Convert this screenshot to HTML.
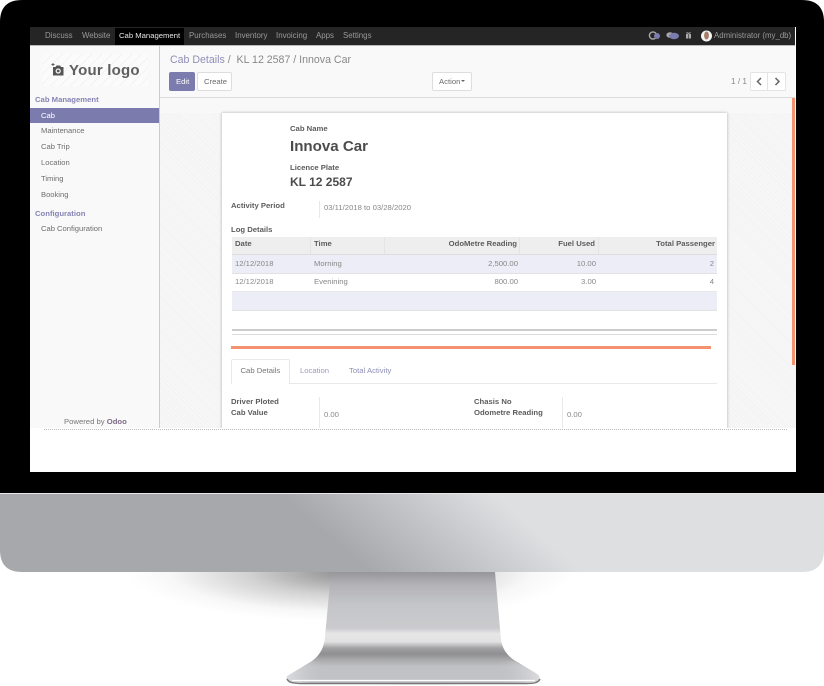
<!DOCTYPE html>
<html><head><meta charset="utf-8"><style>
html,body{margin:0;padding:0;background:#fff}
body{width:824px;height:686px;position:relative;overflow:hidden;font-family:"Liberation Sans",sans-serif}
.a{position:absolute}
.t{position:absolute;white-space:nowrap;line-height:10px;height:10px;font-size:7.7px;color:#6b6b6b;filter:blur(.25px)}
.n{color:#999;top:31px;font-size:7.9px}
.b{font-weight:bold;color:#5c5c5c;font-size:7.7px}
.s{color:#6e6e6e;left:41px;font-size:7.6px}
.r{text-align:right}
.hatch{background-color:#f7f7f7;background-image:repeating-linear-gradient(45deg,#f1f1f1 0 1px,#fafafa 1px 2px)}
</style></head><body>
<svg class="a" style="left:0;top:0" width="824" height="686" viewBox="0 0 824 686">
<defs>
<linearGradient id="sv" gradientUnits="userSpaceOnUse" x1="280" y1="494" x2="371" y2="389"><stop offset="0" stop-color="#a7a8ac"/><stop offset=".5" stop-color="#c2c3c6"/><stop offset="1" stop-color="#dedfe1"/></linearGradient>
<linearGradient id="st" x1="0" y1="0" x2="0" y2="1"><stop offset="0" stop-color="#97979b"/><stop offset=".12" stop-color="#b4b4b8"/><stop offset=".3" stop-color="#c5c6c9"/><stop offset=".5" stop-color="#cbcbce"/><stop offset=".55" stop-color="#e6e6e7"/><stop offset=".62" stop-color="#e2e2e3"/><stop offset=".68" stop-color="#a0a0a2"/><stop offset=".73" stop-color="#8f8f91"/><stop offset=".78" stop-color="#a8a8aa"/><stop offset=".84" stop-color="#c0c1c4"/><stop offset="1" stop-color="#c2c3c6"/></linearGradient>
<linearGradient id="ft" gradientUnits="userSpaceOnUse" x1="287" y1="0" x2="540" y2="0"><stop offset="0" stop-color="#dcdcde"/><stop offset=".14" stop-color="#c6c7ca" stop-opacity="0"/><stop offset=".84" stop-color="#c6c7ca" stop-opacity="0"/><stop offset="1" stop-color="#dcdcde"/></linearGradient>
<radialGradient id="sh" cx=".5" cy=".5" r=".5"><stop offset="0" stop-color="#000" stop-opacity=".45"/><stop offset=".45" stop-color="#000" stop-opacity=".18"/><stop offset=".8" stop-color="#000" stop-opacity=".03"/><stop offset="1" stop-color="#000" stop-opacity="0"/></radialGradient>
</defs>
<rect x="125" y="522" width="450" height="100" fill="url(#sh)"/>
<path d="M0 480V550Q0 572 22 572H802Q824 572 824 550V480Z" fill="url(#sv)"/>
<path d="M0 493V22Q0 0 22 0H802Q824 0 824 22V493Z" fill="#000"/>
<rect x="0" y="493" width="824" height="1" fill="#e8e8e8"/>
<path d="M331 572H495L501 640C503 650 507 655 514 660L537 674C541 677 540 681 536 682C500 685 325 685 291 682C286 681 285 677 289 675L312 661C320 655 324 648 325 637Z" fill="url(#st)"/>
<path d="M312 661H514L537 674C541 677 540 681 536 682C500 685 325 685 291 682C286 681 285 677 289 675Z" fill="url(#ft)"/>
<path d="M287 679C289 683 293 683 300 683.5H526C534 683.5 538 683 540 679" fill="none" stroke="#777" stroke-width="1.4"/>
<path d="M292 680.5H535" stroke="#fff" stroke-width="1.2"/>
</svg>

<div class="a" style="left:30px;top:27px;width:766px;height:445px;background:#fff"></div>
<!-- navbar -->
<div class="a" style="left:30px;top:27px;width:765px;height:19px;background:#252525;border-bottom:1px solid #bbb;box-sizing:border-box"></div>
<div class="a" style="left:115px;top:28px;width:69px;height:17px;background:#000"></div>
<span class="t n" style="left:45px">Discuss</span>
<span class="t n" style="left:82px">Website</span>
<span class="t n" style="left:119px;color:#e4e4e4;font-size:7.7px">Cab Management</span>
<span class="t n" style="left:189px">Purchases</span>
<span class="t n" style="left:235px">Inventory</span>
<span class="t n" style="left:276px">Invoicing</span>
<span class="t n" style="left:316px">Apps</span>
<span class="t n" style="left:343px">Settings</span>
<svg class="a" style="left:645px;top:28px" width="72" height="17" viewBox="645 28 72 17">
<circle cx="653" cy="35.5" r="3.6" fill="none" stroke="#aaa" stroke-width="1.4"/>
<circle cx="657" cy="36" r="3" fill="#7c7bad"/>
<ellipse cx="670" cy="35" rx="3.6" ry="2.8" fill="#aaa"/>
<ellipse cx="674" cy="36" rx="5" ry="3.2" fill="#7c7bad"/>
<rect x="686" y="34" width="5" height="4.5" fill="#aaa"/><path d="M685.5 33.5H691.5M688.5 32V38.5" stroke="#222" stroke-width=".6"/><path d="M686.5 32.5L688.5 33.5L690.5 32.5" stroke="#aaa" fill="none"/>
<circle cx="706.5" cy="36" r="5.5" fill="#f4f4f4"/>
<ellipse cx="706.5" cy="35.5" rx="2.4" ry="4" fill="#a57d66"/>
</svg>
<span class="t n" style="left:714px;font-size:7.85px">Administrator (my_db)</span>

<!-- sidebar -->
<div class="a" style="left:30px;top:46px;width:130px;height:383px;background:#f9f9f9;border-right:1px solid #ccc;box-sizing:border-box"></div>
<div class="a" style="left:42px;top:54px;width:106px;height:32px;background:repeating-linear-gradient(135deg,#f3f3f3 0 1px,#fbfbfb 1px 7px)"></div>
<svg class="a" style="left:50px;top:62px" width="16" height="15" viewBox="0 0 16 15"><path d="M3 5H5.5L6.5 3.5H10L11 5H13.5V13.5H3Z" fill="#555"/><circle cx="8.2" cy="9" r="2.6" fill="#f9f9f9"/><circle cx="8.2" cy="9" r="1.4" fill="#555"/><path d="M3 1V4M1.5 2.5H4.5" stroke="#555" stroke-width=".9"/></svg>
<span class="t" style="left:69px;top:62px;height:17px;line-height:17px;font-size:15px;font-weight:bold;color:#5f5f5f;letter-spacing:.2px">Your logo</span>
<span class="t b" style="left:35px;top:94.5px;color:#8584b5">Cab Management</span>
<div class="a" style="left:30px;top:108px;width:129px;height:15px;background:#7c7bad"></div>
<span class="t s" style="top:110.5px;color:#fff">Cab</span>
<span class="t s" style="top:126px">Maintenance</span>
<span class="t s" style="top:141.5px">Cab Trip</span>
<span class="t s" style="top:157.5px">Location</span>
<span class="t s" style="top:173.5px">Timing</span>
<span class="t s" style="top:189.5px">Booking</span>
<span class="t b" style="left:35px;top:208.5px;color:#8584b5">Configuration</span>
<span class="t s" style="top:224px">Cab Configuration</span>
<span class="t" style="left:64px;top:417px;color:#777">Powered by <b style="color:#7c6a85">Odoo</b></span>

<!-- control panel -->
<div class="a" style="left:160px;top:46px;width:635px;height:52px;background:#f9f9f9;border-bottom:1px solid #ddd;box-sizing:border-box"></div>
<span class="t" style="left:170px;top:54.5px;font-size:10.6px;color:#888"><span style="color:#8f8eb8">Cab Details</span> /&nbsp; KL 12 2587 / Innova Car</span>
<div class="a" style="left:169px;top:72px;width:26px;height:19px;background:#7c7bad;border-radius:2px"></div>
<span class="t" style="left:176px;top:76.5px;color:#fff;font-size:7.7px">Edit</span>
<div class="a" style="left:197px;top:72px;width:35px;height:19px;background:#fff;border:1px solid #ddd;box-sizing:border-box;border-radius:2px"></div>
<span class="t" style="left:204px;top:76.5px;font-size:7.7px">Create</span>
<div class="a" style="left:432px;top:72px;width:40px;height:19px;background:#fff;border:1px solid #ddd;box-sizing:border-box;border-radius:2px"></div>
<span class="t" style="left:439px;top:76.5px;font-size:7.7px">Action</span>
<div class="a" style="left:461px;top:80px;border:2.5px solid transparent;border-top-color:#666;border-bottom:0"></div>
<span class="t" style="left:731px;top:76.5px;font-size:8.2px;color:#888">1 / 1</span>
<div class="a" style="left:750px;top:72px;width:36px;height:19px;background:#fff;border:1px solid #e4e4e4;box-sizing:border-box;border-radius:2px"></div>
<div class="a" style="left:767px;top:72px;width:1px;height:19px;background:#e4e4e4"></div>
<svg class="a" style="left:750px;top:72px" width="36" height="19"><path d="M11 6L7.5 9.5L11 13M25.5 6L29 9.5L25.5 13" fill="none" stroke="#666" stroke-width="1.5"/></svg>

<!-- main -->
<div class="a hatch" style="left:160px;top:98px;width:636px;height:331px"></div>
<div class="a" style="left:160px;top:98px;width:632px;height:15px;background:#f8f8f8"></div>
<div class="a" style="left:792px;top:98px;width:3px;height:267px;background:#f4916f"></div>
<div class="a" style="left:222px;top:113px;width:505px;height:316px;background:#fff;box-shadow:0 0 3px rgba(0,0,0,.3)"></div>

<span class="t b" style="left:290px;top:124px">Cab Name</span>
<span class="t" style="left:290px;top:138px;height:18px;line-height:18px;font-size:15.1px;font-weight:bold;color:#4c4c4c">Innova Car</span>
<span class="t b" style="left:290px;top:162.5px">Licence Plate</span>
<span class="t" style="left:290px;top:175px;height:15px;line-height:15px;font-size:12px;font-weight:bold;color:#4c4c4c">KL 12 2587</span>
<span class="t b" style="left:231px;top:201px">Activity Period</span>
<div class="a" style="left:319px;top:201px;width:1px;height:17px;background:#e8e8e8"></div>
<span class="t" style="left:324px;top:203px;color:#888">03/11/2018 to 03/28/2020</span>
<span class="t b" style="left:231px;top:224.5px">Log Details</span>

<div class="a" style="left:232px;top:237px;width:485px;height:18px;background:#eee;border-bottom:1px solid #ddd;box-sizing:border-box"></div>
<div class="a" style="left:310px;top:237px;width:1px;height:17px;background:#e4e4e4"></div>
<div class="a" style="left:384px;top:237px;width:1px;height:17px;background:#e4e4e4"></div>
<div class="a" style="left:519px;top:237px;width:1px;height:17px;background:#e4e4e4"></div>
<div class="a" style="left:598px;top:237px;width:1px;height:17px;background:#e4e4e4"></div>
<span class="t b" style="left:235px;top:239px">Date</span>
<span class="t b" style="left:314px;top:239px">Time</span>
<span class="t b r" style="right:307px;top:239px">OdoMetre Reading</span>
<span class="t b r" style="right:229px;top:239px">Fuel Used</span>
<span class="t b r" style="right:109px;top:239px">Total Passenger</span>

<div class="a" style="left:232px;top:255px;width:485px;height:19px;background:#ecedf6;border-bottom:1px solid #e2e2e2;box-sizing:border-box"></div>
<span class="t" style="left:235px;top:259px;color:#888">12/12/2018</span>
<span class="t" style="left:314px;top:259px;color:#888">Morning</span>
<span class="t r" style="right:306px;top:259px;color:#888">2,500.00</span>
<span class="t r" style="right:228px;top:259px;color:#888">10.00</span>
<span class="t r" style="right:110px;top:259px;color:#888">2</span>
<div class="a" style="left:232px;top:274px;width:485px;height:18px;border-bottom:1px solid #e8e8e8;box-sizing:border-box"></div>
<span class="t" style="left:235px;top:277px;color:#888">12/12/2018</span>
<span class="t" style="left:314px;top:277px;color:#888">Evenining</span>
<span class="t r" style="right:306px;top:277px;color:#888">800.00</span>
<span class="t r" style="right:228px;top:277px;color:#888">3.00</span>
<span class="t r" style="right:110px;top:277px;color:#888">4</span>
<div class="a" style="left:232px;top:292px;width:485px;height:19px;background:#ecedf6;border-bottom:1px solid #e2e2e2;box-sizing:border-box"></div>
<div class="a" style="left:232px;top:329px;width:485px;height:2px;background:#ccc"></div>
<div class="a" style="left:232px;top:333.5px;width:485px;height:1px;background:#ddd"></div>
<div class="a" style="left:231px;top:346px;width:480px;height:3px;background:#f4916f"></div>

<div class="a" style="left:231px;top:383px;width:486px;height:1px;background:#e8e8e8"></div>
<div class="a" style="left:231px;top:359px;width:59px;height:25px;background:#fff;border:1px solid #e8e8e8;border-bottom:0;box-sizing:border-box;border-radius:2px 2px 0 0"></div>
<span class="t" style="left:240.5px;top:366px;color:#777">Cab Details</span>
<span class="t" style="left:300px;top:366px;color:#9a9ac0">Location</span>
<span class="t" style="left:349px;top:366px;color:#8f8eb8">Total Activity</span>

<span class="t b" style="left:231px;top:397px">Driver Ploted</span>
<span class="t b" style="left:231px;top:408px">Cab Value</span>
<div class="a" style="left:319px;top:397px;width:1px;height:32px;background:#e8e8e8"></div>
<span class="t" style="left:324px;top:410px;color:#888">0.00</span>
<span class="t b" style="left:474px;top:397px">Chasis No</span>
<span class="t b" style="left:474px;top:408px">Odometre Reading</span>
<div class="a" style="left:562px;top:397px;width:1px;height:32px;background:#e8e8e8"></div>
<span class="t" style="left:567px;top:410px;color:#888">0.00</span>

<div class="a" style="left:30px;top:428px;width:766px;height:44px;background:#fff"></div>
<div class="a" style="left:44px;top:429px;width:743px;height:0;border-top:1px dotted #bbb"></div>
</body></html>
